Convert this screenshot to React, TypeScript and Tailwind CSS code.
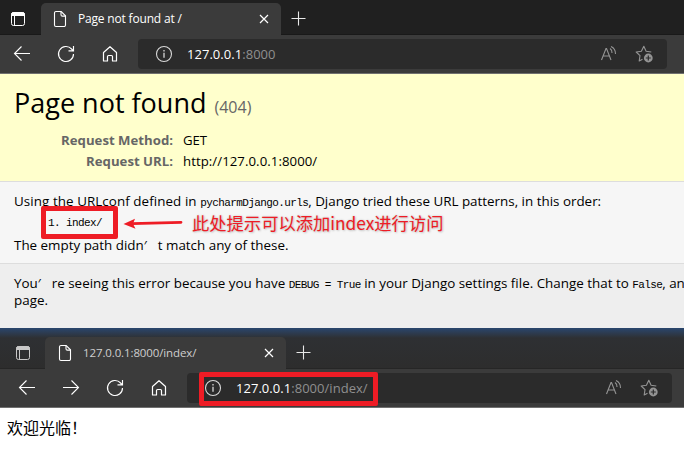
import React from "react";

type IconProps = { className?: string };

const WindowIcon = ({ className = "" }: IconProps) => (
  <svg className={`h-4 w-4 shrink-0 ${className}`} viewBox="0 0 16 16" fill="none" stroke="currentColor">
    <rect x="1.5" y="1.5" width="13" height="13" rx="2" />
    <path d="M1.5 3.500a2 2 0 0 1 2-2h9a2 2 0 0 1 2 2v1h-13z" fill="currentColor" />
    <path d="M4.500 5v9.500" />
  </svg>
);

const FileIcon = ({ className = "" }: IconProps) => (
  <svg className={`h-[18px] w-[14px] shrink-0 ${className}`} viewBox="0 0 14 18" fill="none" stroke="currentColor" strokeWidth="1.1">
    <path d="M3 1.5h5.2l4.3 4.3v9.2a1.5 1.5 0 0 1-1.5 1.5H3A1.5 1.5 0 0 1 1.5 15V3A1.5 1.5 0 0 1 3 1.5z" />
    <path d="M8 1.7v3a1.4 1.4 0 0 0 1.4 1.4h3" />
  </svg>
);

const CloseIcon = ({ className = "" }: IconProps) => (
  <svg className={`h-[10px] w-[10px] shrink-0 ${className}`} viewBox="0 0 10 10" stroke="currentColor" strokeWidth="1.2">
    <path d="M1 1l8 8M9 1L1 9" />
  </svg>
);

const PlusIcon = ({ className = "" }: IconProps) => (
  <svg className={`h-4 w-4 shrink-0 ${className}`} viewBox="0 0 16 16" stroke="currentColor" strokeWidth="1.1">
    <path d="M.5 7.500h14M7.500.5v14" />
  </svg>
);

const ArrowIcon = ({ className = "" }: IconProps) => (
  <svg className={`h-[18px] w-[18px] shrink-0 ${className}`} viewBox="0 0 18 18" fill="none" stroke="currentColor" strokeWidth="1.1">
    <path d="M17 8.5H1.500M8.500 1.500l-7 7 7 7" />
  </svg>
);

const RefreshIcon = ({ className = "" }: IconProps) => (
  <svg className={`h-[18px] w-[18px] shrink-0 ${className}`} viewBox="0 0 18 18" fill="none" stroke="currentColor" strokeWidth="1.15">
    <path d="M16.5 9A7.5 7.5 0 1 1 14.600 4l1.400 1.500M16.500 1v4.800h-5" />
  </svg>
);

const HomeIcon = ({ className = "" }: IconProps) => (
  <svg className={`h-[18px] w-[18px] shrink-0 ${className}`} viewBox="0 0 18 18" fill="none" stroke="currentColor" strokeWidth="1.2">
    <path d="M2.500 7.500L9 1.700l6.500 5.800v8.500h-4v-4.500a1 1 0 0 0-1-1h-3a1 1 0 0 0-1 1V16h-4z" strokeLinejoin="round" />
  </svg>
);

const InfoIcon = ({ className = "" }: IconProps) => (
  <svg className={`h-[18px] w-[18px] shrink-0 ${className}`} viewBox="0 0 18 18" fill="none" stroke="currentColor" strokeWidth="1.1">
    <circle cx="9" cy="9" r="7.500" />
    <path d="M9 7.800v5M9 5v1.500" strokeWidth="1.300" />
  </svg>
);

const ReadAloudIcon = ({ className = "" }: IconProps) => (
  <svg className={`h-[18px] w-[18px] shrink-0 ${className}`} viewBox="0 0 18 18" fill="none" stroke="currentColor" strokeWidth="1.1">
    <path d="M1.500 15L6 3.500h.500L11 15M3 11h6.500" />
    <path d="M10 3.500c1.500 1 2.200 2.700 2 4.500M11 1.500c3 1.400 4.600 4 4.500 7.500" />
  </svg>
);

const StarPlusIcon = ({ className = "" }: IconProps) => (
  <svg className={`h-[18px] w-[18px] shrink-0 ${className}`} viewBox="0 0 18 18" fill="none" stroke="currentColor" strokeWidth="1.1">
    <path d="M7.500 14.200L4.200 16l.8-5.300L1.200 7l5.200-.8L8.800 1.300l2.300 4.900 5.200.8" strokeLinejoin="round" />
    <circle cx="13.300" cy="13" r="4.400" fill="currentColor" stroke="none" />
    <path d="M13.300 10.500v5M10.800 13h5" stroke="#2b2b2b" strokeWidth="1.200" />
  </svg>
);

type BrowserProps = {
  title: React.ReactNode;
  path: string;
  second?: boolean;
};

function BrowserChrome({ title, path, second = false }: BrowserProps) {
  return (
    <header className="text-white">
      <div
        className={
          second
            ? "flex h-[41px] items-end border-b border-[#262626] bg-linear-to-b from-[#29466e] via-[#2e3033] via-25% to-[#2d2d2d] pl-[15px]"
            : "flex h-[35px] items-end border-b border-[#191919] bg-[#202020] pl-[10px]"
        }
      >
        <WindowIcon className={second ? "mb-[7px] text-[#c8c8c8]" : "mb-[7px]"} />
        <div
          className={
            second
              ? "-mb-px ml-[14px] flex h-[32px] w-[241px] items-center rounded-t-[5px] bg-[#3b3b3b] pr-[12px] pl-[13px]"
              : "-mb-px ml-[15px] flex h-[32px] w-[240px] items-center rounded-t-[5px] bg-[#3b3b3b] pr-[12px] pl-[12px]"
          }
        >
          <FileIcon />
          <span className={second ? "ml-[11px] text-[11.500px] tracking-[-0.010em] text-[#cfcfcf]" : "ml-[11px] text-[12px] tracking-[-0.015em]"}>{title}</span>
          <CloseIcon className="ml-auto" />
        </div>
        <PlusIcon className="mb-[7px] ml-[10px] text-[#e8e8e8]" />
      </div>
      <div
        className={
          second
            ? "flex h-[39px] items-center border-b border-[#707070] bg-[#3b3b3b] pr-[12px] pl-[18px]"
            : "flex h-[39px] items-center border-b border-[#707070] bg-[#3b3b3b] pr-[17px] pl-[13px]"
        }
      >
        <ArrowIcon />
        {second && <ArrowIcon className="ml-[26px] -scale-x-100" />}
        <RefreshIcon className="ml-[26px]" />
        <HomeIcon className="ml-[26px]" />
        <div className="ml-[19px] flex h-[30px] flex-1 items-center rounded-[4px] bg-[#2b2b2b] pr-[14px] pl-[17px]">
          <InfoIcon className="text-[#d8d8d8]" />
          <span className="ml-[14px] pt-px text-[13px] tracking-[0.003em] text-[#8f8f8f]">
            <span className="font-medium text-white">127.0.0.1</span>
            {path}
          </span>
          <ReadAloudIcon className="ml-auto text-[#949494]" />
          <StarPlusIcon className="ml-[17px] text-[#949494]" />
        </div>
      </div>
    </header>
  );
}

const Code = ({ children }: { children: React.ReactNode }) => (
  <code className="font-['Liberation_Mono','DejaVu_Sans_Mono',monospace] text-[11px] tracking-[-0.600px]">{children}</code>
);

export default function App() {
  return (
    <main className="relative h-[473px] w-[684px] overflow-hidden bg-white font-['Open_Sans','Noto_Sans_CJK_SC',sans-serif] whitespace-nowrap text-black">
      <BrowserChrome title="Page not found at /" path=":8000" />

      <section className="h-[108px] border-b border-[#dddddd] bg-[#ffffcc] pl-[14px]">
        <h1 className="h-[56px] pt-[9px] text-[27px] leading-[40px]">
          Page not found <small className="ml-px text-[16px] text-[#666666]">(404)</small>
        </h1>
        <dl className="grid grid-cols-[159px_1fr] gap-x-[10px] text-[13.200px] leading-[21px]">
          <dt className="text-right font-bold text-[#666666]">Request Method:</dt>
          <dd className="tracking-[-0.010em]">GET</dd>
          <dt className="text-right font-bold text-[#666666]">Request URL:</dt>
          <dd className="tracking-[0.005em]">http://127.0.0.1:8000/</dd>
        </dl>
      </section>

      <section className="h-[82px] border-b border-[#dddddd] bg-[#f6f6f6] pt-[9px] pl-[14px] text-[13.400px]">
        <p className="h-[21px] leading-[20px]">
          <span className="tracking-[0.005em]">Using the URLconf defined in </span><Code>pycharmDjango.urls</Code><span>, Django tried these URL patterns, in this order:</span>
        </p>
        <p className="h-[22px] pl-[34px] font-['Liberation_Mono',monospace] text-[11px] leading-[23px] tracking-[-0.600px]">1. index/</p>
        <p className="leading-[22px]">
          <span>The empty path didn</span><span className="inline-block w-[14px]">′</span><span>t match any of these.</span>
        </p>
      </section>

      <section className="h-[64px] bg-[#eeeeee] pt-[11px] pl-[14px] text-[13.400px] leading-[17px]">
        <p className="h-[17px]">
          <span>You</span><span className="inline-block w-[14px]">′</span><span>re seeing this error because you have </span><Code>DEBUG = True</Code><span> in your Django settings file. Change that to </span><Code>False</Code><span>, an</span>
        </p>
        <p>page.</p>
      </section>

      <BrowserChrome second title="127.0.0.1:8000/index/" path=":8000/index/" />
      <section className="pt-[7px] pl-[7px] font-['Noto_Sans_CJK_SC',sans-serif] text-[16px] leading-[24px]">欢迎光临！</section>

      <div className="absolute top-[206px] left-[41px] h-[33px] w-[77px] rounded-[2px] border-[5px] border-[#ee1c25]" />
      <svg className="absolute top-[214px] left-[122px] h-[20px] w-[64px]" viewBox="0 0 64 20">
        <path d="M10 9.700L59 8.300" stroke="#ee1c25" strokeWidth="2.800" strokeLinecap="round" />
        <path d="M1.500 10L13 4.800 11 9.700l2.500 5z" fill="#ee1c25" />
      </svg>
      <p className="absolute top-[210px] left-[192px] font-['Noto_Sans_CJK_SC',sans-serif] text-[17.300px] leading-[26px] text-[#ee1c25] [text-shadow:0_0_2px_#bbb,1px_1px_2px_#ccc]">
        此处提示可以添加index进行访问
      </p>
      <div className="absolute top-[372px] left-[199px] h-[34px] w-[179px] rounded-[2px] border-[5px] border-[#ee1c25]" />
    </main>
  );
}
